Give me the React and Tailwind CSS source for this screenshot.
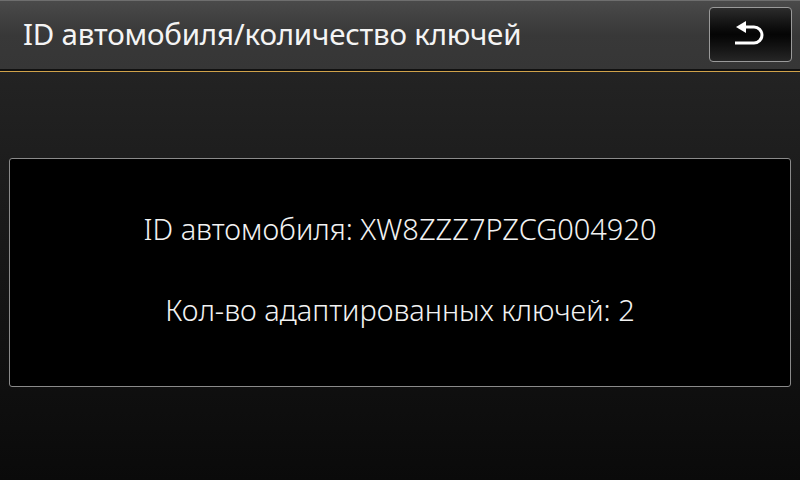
export default function App() {
  return (
    <div
      className="w-[800px] h-[480px] flex flex-col overflow-hidden bg-black text-white"
      style={{ fontFamily: '"Noto Sans", "Open Sans", sans-serif' }}
    >
      {/* header */}
      <div className="h-[69px] flex items-center justify-between pl-[23px] pr-[8px] border-t border-[#6e6e6e] bg-gradient-to-b from-[#4a4a4a] via-[#383838] to-[#363636]">
        <h1 className="text-[29.5px] leading-none tracking-[-0.2px] text-[#f4f4f4] pb-[3px]">
          ID автомобиля/количество ключей
        </h1>
        <button className="w-[83px] h-[55px] mb-[1px] rounded-[4px] border border-[#9a9a9a] bg-gradient-to-b from-[#2c2c2c] via-[#050505] to-[#262626] flex items-center justify-center">
          <svg width="36" height="30" viewBox="0 0 36 30" fill="none">
            <path d="M2 23 H21 A8 8 0 0 0 21 7 H12" stroke="white" strokeWidth="3" />
            <path d="M3 7 L13 1 V13 Z" fill="white" />
          </svg>
        </button>
      </div>
      <div className="h-[2px] bg-[#111]" />
      <div className="h-[1px] bg-[#d0a24a]" />

      {/* body */}
      <div className="flex-1 flex flex-col px-[9px] pt-[86px] pb-[93px] bg-gradient-to-b from-[#232323] to-[#0a0a0a]">
        <div className="flex-1 rounded-[3px] border border-[#8a8a8a] bg-black flex flex-col items-center justify-center gap-[51px] pb-[6px] text-[29px] leading-[30px] font-light text-[#f2f2f2]">
          <div>ID автомобиля: XW8ZZZ7PZCG004920</div>
          <div>Кол-во адаптированных ключей: 2</div>
        </div>
      </div>
    </div>
  );
}
